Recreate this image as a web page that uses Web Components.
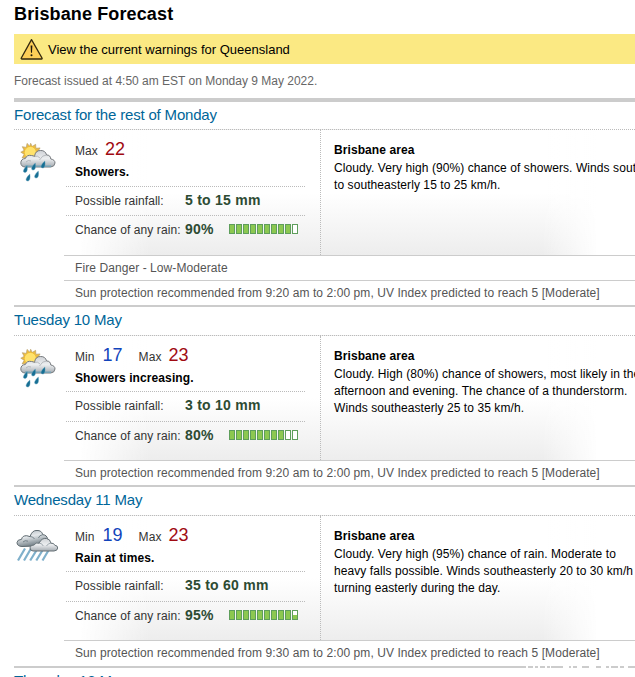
<!DOCTYPE html>
<html lang="en">
<head>
<meta charset="utf-8">
<title>Brisbane Forecast</title>
<style>
    html, body {
        margin: 0;
        height: 677px;
        overflow: hidden;
        background: #fff;
    }
</style>
</head>
<body>
<forecast-page>
    <warning-bar slot="warning">View the current warnings for Queensland</warning-bar>

    <forecast-day class="first" heading="Forecast for the rest of Monday" icon="showers" max="22" rain="5 to 15 mm" chance="90">
        <span slot="summary">Showers.</span>
        <span slot="text">Cloudy. Very high (90%) chance of showers. Winds southerly<br>to southeasterly 15 to 25 km/h.</span>
        <alert-row slot="alerts">Fire Danger - Low-Moderate</alert-row>
        <alert-row slot="alerts">Sun protection recommended from 9:20 am to 2:00 pm, UV Index predicted to reach 5 [Moderate]</alert-row>
    </forecast-day>

    <forecast-day heading="Tuesday 10 May" icon="showers" min="17" max="23" rain="3 to 10 mm" chance="80">
        <span slot="summary">Showers increasing.</span>
        <span slot="text">Cloudy. High (80%) chance of showers, most likely in the<br>afternoon and evening. The chance of a thunderstorm.<br>Winds southeasterly 25 to 35 km/h.</span>
        <alert-row slot="alerts">Sun protection recommended from 9:20 am to 2:00 pm, UV Index predicted to reach 5 [Moderate]</alert-row>
    </forecast-day>

    <forecast-day class="last" heading="Wednesday 11 May" icon="rain" min="19" max="23" rain="35 to 60 mm" chance="95">
        <span slot="summary">Rain at times.</span>
        <span slot="text">Cloudy. Very high (95%) chance of rain. Moderate to<br>heavy falls possible. Winds southeasterly 20 to 30 km/h<br>turning easterly during the day.</span>
        <alert-row slot="alerts">Sun protection recommended from 9:30 am to 2:00 pm, UV Index predicted to reach 5 [Moderate]</alert-row>
    </forecast-day>

    <day-heading>Thursday 12 May</day-heading>
</forecast-page>

<script>
/**
 * Page shell: title, warning, issue time and the list of days
 */
class ForecastPage extends HTMLElement {
    constructor() {
        super();
        this.attachShadow({ mode: 'open' });
        this.shadowRoot.innerHTML = `
            <style>
                :host {
                    display: flex;
                    flex-direction: column;
                    position: relative;
                    height: 677px;
                    padding-left: 14px;
                    box-sizing: border-box;
                    overflow: hidden;
                    font: 12px/17px "Liberation Sans", Arial, sans-serif;
                    color: #000;
                    white-space: nowrap;
                }
                h1 {
                    margin: 0;
                    height: 34px;
                    flex: none;
                    font-size: 18px;
                    line-height: 29px;
                    letter-spacing: .13px;
                }
                .issued {
                    height: 34px;
                    flex: none;
                    line-height: 34px;
                    color: #666;
                    border-bottom: 4px solid #ccc;
                }
                .wear {
                    position: absolute;
                    right: 0;
                    bottom: 9px;
                }
            </style>
            <h1>Brisbane Forecast</h1>
            <slot name="warning"></slot>
            <div class="issued">Forecast issued at 4:50 am EST on Monday 9 May 2022.</div>
            <slot></slot>
            <svg class="wear" width="110" height="2" viewBox="0 0 110 2">
                <path d="M1 1h2M8 1h2M13 1h2M20 1h2M25 1h1M38 1h6M46 1h2M52 1h5M64 1h7M76 1h5M84 1h2M93 1h2M99 1h4" stroke="#fff" stroke-width="2"/>
            </svg>
        `;
    }
}

/**
 * Yellow bar with the warning triangle
 */
class WarningBar extends HTMLElement {
    constructor() {
        super();
        this.attachShadow({ mode: 'open' });
        this.shadowRoot.innerHTML = `
            <style>
                :host {
                    display: flex;
                    flex: none;
                    align-items: center;
                    gap: 4px;
                    height: 30px;
                    padding-left: 6px;
                    background: #fbe983;
                    font-size: 13px;
                }
                svg { display: block; }
            </style>
            <svg width="24" height="22" viewBox="0 0 24 22">
                <path d="M11.5 1.6 L22 20 Q22.5 21 21.5 21 H2 Q.8 21 1.3 20 Z" fill="#fdcf57" stroke="#33290f" stroke-width="1.3" stroke-linejoin="round"/>
                <path d="M10.6 7.5 h1.8 l-.4 7.3 h-1z" fill="#1b170b"/>
                <circle cx="11.5" cy="17.2" r="1" fill="#1b170b"/>
            </svg>
            <span><slot></slot></span>
        `;
    }
}

/**
 * Blue heading above each day
 */
class DayHeading extends HTMLElement {
    constructor() {
        super();
        this.attachShadow({ mode: 'open' });
        this.shadowRoot.innerHTML = `
            <style>
                :host {
                    display: block;
                    flex: none;
                    height: var(--heading-height, 28px);
                    line-height: 26px;
                    font-size: 15px;
                    letter-spacing: -.18px;
                    color: #069;
                }
            </style>
            <slot></slot>
        `;
    }
}

/**
 * One line notice below the forecast
 */
class AlertRow extends HTMLElement {
    constructor() {
        super();
        this.attachShadow({ mode: 'open' });
        this.shadowRoot.innerHTML = `
            <style>
                :host {
                    display: block;
                    height: var(--alert-height, 24px);
                    margin-left: 50px;
                    padding-left: 11px;
                    border-top: 1px solid #ccc;
                    line-height: 24px;
                    color: #555;
                }
            </style>
            <slot></slot>
        `;
    }
}

/**
 * Ten small boxes, filled according to the "value" attribute (0 - 100)
 */
class RainMeter extends HTMLElement {
    constructor() {
        super();
        this.attachShadow({ mode: 'open' });
    }

    connectedCallback() {
        const value = Number(this.getAttribute('value'));
        let cells = '';
        for (let i = 0; i < 10; i++) {
            const fill = Math.max(0, Math.min(100, (value - i * 10) * 10));
            cells += `<i style="--fill: ${fill}%"></i>`;
        }
        this.shadowRoot.innerHTML = `
            <style>
                :host { display: flex; gap: 1px; }
                i {
                    width: 4px;
                    height: 8px;
                    border: 1px solid #5e9e5b;
                    background: linear-gradient(to top, #8cc850 var(--fill), #fff var(--fill));
                }
            </style>
            ${cells}
        `;
    }
}

const DROP = 'M3.8 0 C4.3 2.5 4.3 7 1.7 7 C-.9 7 -.4 3.8 3.8 0Z';

const ICONS = {
    showers: `
        <path d="M12.5 1.2 l1.5 3 3.2-2 .2 3.7 4-.3-2 3.2 3 2-3.4 1.5 1.4 3.5-3.6-.8-1.2 3.7-3-2.6-3.4 2.3-.6-3.8-4.2.5 2-3.6-3.2-1.9 3.2-1.7-1.8-3.5 3.8.7 .7-3.8 2.6 2.6z" transform="translate(-1.6 -1) scale(1.06)" fill="#ebbb45" stroke="#b39c68" stroke-width=".6"/>
        <circle cx="11.3" cy="9.4" r="6" fill="#ffe26c" stroke="#edb72b" stroke-width=".7"/>
        <path d="M6 24 Q1.8 23.6 1.8 19.8 Q2 15.8 6.4 15.5 Q7.8 11.5 12.5 12.5 Q14.2 12.6 15.5 13.5 Q16.3 7.3 21.6 7.5 Q26.3 7.3 27.6 12 Q31.3 11.8 31.8 16 Q36 16.7 36 20 Q35.7 23.6 31.8 24 Z" fill="url(#cloud)" stroke="#75797d" stroke-width="1"/>
        <path d="M15.5 13.5 Q18.5 12 21 15 M20.5 17 Q23.4 11.8 27.6 12 M7 19 Q9 16.5 12 18" fill="none" stroke="#a4a8ac" stroke-width=".7"/>
        <path d="M6 23.2 H32" stroke="#77a5b8" stroke-width="1.4"/>
        <g fill="#176f94" stroke="#5fa0ba" stroke-width=".4">
            <path d="${DROP}" transform="translate(4.3 22.5)"/>
            <path d="${DROP}" transform="translate(12.5 20)"/>
            <path d="${DROP}" transform="translate(22 18)"/>
            <path d="${DROP}" transform="translate(7 31)"/>
            <path d="${DROP}" transform="translate(15.5 28)"/>
        </g>`,
    rain: `
        <path d="M6 17.5 Q1 17.2 1 13.5 Q1.3 10.5 5.5 10.4 Q6.3 6.5 10.7 6.7 L14 7.6 Q16.2 1 21 1.5 Q25.5 1.2 26.8 5.7 Q31 5.7 32 11 Q34.5 13 33 16.5 Z" fill="url(#dark)" stroke="#5e6a70" stroke-width="1"/>
        <path d="M14 7.6 Q17 7.2 18.5 10 M26.8 5.7 Q23.5 6 22.4 9 M7 13 Q9 10.8 12 12.2" fill="none" stroke="#6c7a82" stroke-width=".9"/>
        <g stroke="#7fb0cb" stroke-width="2.2">
            <path d="M9 19.5 L2 31.5 M15 19.5 L8 31.5 M21 20.5 L14.2 31.5 M27 20.5 L20.3 31.5 M33 20.5 L26.5 31.5"/>
        </g>
        <path d="M17 22 Q14 21.7 14 18.8 Q14.5 15.7 18.2 16 Q19.7 12.9 23 14.2 Q25.8 8.6 30.5 9.5 Q34.2 10 35 14.2 Q38 13.8 38.8 16.3 Q41.8 16.5 41.7 19 Q41.4 21.8 38 22 Z" fill="url(#cloud)" stroke="#667177" stroke-width="1"/>
        <path d="M23 14.2 Q26 14 27.3 17 M30.5 17 Q32 14.2 35 14.2" fill="none" stroke="#8b979e" stroke-width=".8"/>`
};

/**
 * Weather symbol, name="showers" or name="rain"
 */
class WeatherIcon extends HTMLElement {
    constructor() {
        super();
        this.attachShadow({ mode: 'open' });
    }

    connectedCallback() {
        this.shadowRoot.innerHTML = `
            <style>
                :host { display: block; }
                svg { display: block; overflow: visible; }
            </style>
            <svg width="44" height="40" viewBox="0 0 44 40">
                <defs>
                    <linearGradient id="cloud" x1="0" y1="0" x2="0" y2="1">
                        <stop offset="0" stop-color="#cfd2d6"/>
                        <stop offset=".5" stop-color="#eceef0"/>
                        <stop offset="1" stop-color="#a4abb1"/>
                    </linearGradient>
                    <linearGradient id="dark" x1="0" y1="0" x2=".4" y2="1">
                        <stop offset="0" stop-color="#aeb6bc"/>
                        <stop offset=".45" stop-color="#e3e7ea"/>
                        <stop offset="1" stop-color="#6f7c84"/>
                    </linearGradient>
                </defs>
                ${ICONS[this.getAttribute('name')]}
            </svg>
        `;
    }
}

/**
 * A full day: heading, symbol, temperatures, rain and area forecast
 */
class ForecastDay extends HTMLElement {
    constructor() {
        super();
        this.attachShadow({ mode: 'open' });
    }

    connectedCallback() {
        const attr = name => this.getAttribute(name);
        const min = attr('min')
            ? `<span class="label">Min</span><b class="min">${attr('min')}</b>`
            : '';

        this.shadowRoot.innerHTML = `
            <style>
                :host {
                    --body-height: 124px;
                    --summary-height: 55px;
                    --rain-height: 29px;
                    display: block;
                    flex: none;
                    border-bottom: 2px solid #ccc;
                    letter-spacing: .078px;
                }
                :host(.first) {
                    --heading-height: 27px;
                    --body-height: 125px;
                    --summary-height: 56px;
                    --rain-height: 28px;
                }
                :host(.last) { --alert-height: 25px; }
                .body {
                    display: grid;
                    grid-template-columns: 50px 257px 1fr;
                    height: var(--body-height);
                    border-top: 1px dotted #bbb;
                    background:
                        linear-gradient(to right, #fff 66px, rgba(255, 255, 255, 0) 136px, rgba(255, 255, 255, 0) 528px, #fff 584px),
                        linear-gradient(to top, #ededed, #fff 62px);
                }
                weather-icon { padding: 13px 0 0 5px; }
                weather-icon[name="rain"] { padding: 13px 0 0 2px; }
                .facts { border-right: 1px dotted #bbb; }
                .summary {
                    height: var(--summary-height);
                    padding: 7px 0 0 11px;
                    box-sizing: border-box;
                }
                .temps {
                    display: flex;
                    align-items: baseline;
                    height: 25px;
                    line-height: 24px;
                    color: #333;
                }
                .temps b {
                    font-size: 18px;
                    font-weight: normal;
                    letter-spacing: 0;
                }
                .min { margin: 0 16px 0 8px; color: #1144bb; }
                .max { margin-left: 7px; color: #a00a12; }
                .words {
                    font-weight: bold;
                    line-height: 20px;
                    letter-spacing: .1px;
                }
                .row {
                    display: flex;
                    align-items: baseline;
                    margin-left: 2px;
                    width: 239px;
                    box-sizing: border-box;
                    padding-left: 9px;
                    border-top: 1px dotted #bbb;
                    line-height: 27px;
                    height: calc(var(--rain-height) + 1px);
                    color: #333;
                }
                .row > span { width: 110px; }
                .row > b {
                    font-size: 14px;
                    letter-spacing: .25px;
                    color: #2d4b33;
                }
                .row > b.chance { width: 44px; }
                .area {
                    padding: 11px 0 0 13px;
                    overflow: hidden;
                }
                .area h3 {
                    margin: 0 0 1px;
                    font-size: 12px;
                    line-height: 18px;
                }
            </style>
            <day-heading>${attr('heading')}</day-heading>
            <div class="body">
                <weather-icon name="${attr('icon')}"></weather-icon>
                <div class="facts">
                    <div class="summary">
                        <div class="temps">${min}<span class="label">Max</span><b class="max">${attr('max')}</b></div>
                        <div class="words"><slot name="summary"></slot></div>
                    </div>
                    <div class="row"><span>Possible rainfall:</span><b>${attr('rain')}</b></div>
                    <div class="row"><span>Chance of any rain:</span><b class="chance">${attr('chance')}%</b><rain-meter value="${attr('chance')}"></rain-meter></div>
                </div>
                <div class="area">
                    <h3>Brisbane area</h3>
                    <slot name="text"></slot>
                </div>
            </div>
            <slot name="alerts"></slot>
        `;
    }
}

// Register the elements
customElements.define('warning-bar', WarningBar);
customElements.define('day-heading', DayHeading);
customElements.define('alert-row', AlertRow);
customElements.define('rain-meter', RainMeter);
customElements.define('weather-icon', WeatherIcon);
customElements.define('forecast-day', ForecastDay);
customElements.define('forecast-page', ForecastPage);
</script>
</body>
</html>
